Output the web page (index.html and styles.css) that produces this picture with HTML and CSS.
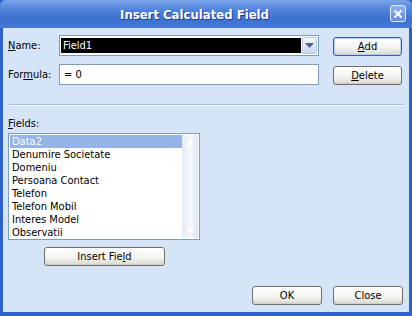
FILE: index.html
```html
<!DOCTYPE html>
<html>
<head>
<meta charset="UTF-8"/>
<title>Insert Calculated Field</title>
<link rel="stylesheet" href="styles.css">
</head>
<body>
<div class="window">
    <div class="titlebar">
        <span class="title">Insert Calculated Field</span>
        <span class="close-btn">
            <svg width="10" height="10" viewBox="0 0 10 10"><path d="M1.5 1.5 L8.5 8.5 M8.5 1.5 L1.5 8.5" stroke="#fff" stroke-width="2"/></svg>
        </span>
    </div>
    <div class="body">
        <div class="top">
            <div class="rows">
                <div class="row">
                    <label class="lbl"><u>N</u>ame:</label>
                    <div class="combo">
                        <span class="combo-text">Field1</span>
                        <span class="combo-arrow">
                            <svg width="9" height="5" viewBox="0 0 9 5"><path d="M0 0 H9 L4.5 5 Z" fill="#4d6185"/></svg>
                        </span>
                    </div>
                </div>
                <div class="row row-formula">
                    <label class="lbl">For<u>m</u>ula:</label>
                    <div class="input">= 0</div>
                </div>
            </div>
            <div class="side">
                <span class="btn btn-default"><u>A</u>dd</span>
                <span class="btn"><u>D</u>elete</span>
            </div>
        </div>
        <div class="sep"></div>
        <div class="fields-lbl"><u>F</u>ields:</div>
        <div class="listbox">
            <ul class="items">
                <li class="selected">Data2</li>
                <li>Denumire Societate</li>
                <li>Domeniu</li>
                <li>Persoana Contact</li>
                <li>Telefon</li>
                <li>Telefon Mobil</li>
                <li>Interes Model</li>
                <li>Observatii</li>
            </ul>
            <div class="scroll">
                <svg width="9" height="5" viewBox="0 0 9 5"><path d="M0 5 L4.5 0 L9 5 Z" fill="#fff"/></svg>
                <svg width="9" height="5" viewBox="0 0 9 5"><path d="M0 0 H9 L4.5 5 Z" fill="#fff"/></svg>
            </div>
        </div>
        <div class="insert-row">
            <span class="btn btn-wide">Insert Fie<u>l</u>d</span>
        </div>
        <div class="footer">
            <span class="btn">OK</span>
            <span class="btn">Close</span>
        </div>
    </div>
</div>
</body>
</html>
```

FILE: styles.css
```css
body {
    margin: 0;
    font-family: "DejaVu Sans Condensed", "DejaVu Sans", sans-serif;
    font-size: 11px;
    color: #000;
}
u {
    text-decoration: underline;
    text-underline-offset: 1px;
}
.window {
    width: 412px;
    height: 316px;
    display: flex;
    flex-direction: column;
    background: #2f62c8;
}
.titlebar {
    height: 28px;
    display: flex;
    align-items: center;
    position: relative;
    background: linear-gradient(#7aa5ea, #4b7fd8 40%, #3e72d0 70%, #4679d4);
    border-radius: 6px 6px 0 0;
}
.title {
    width: 389px;
    text-align: center;
    color: #fff;
    font-family: "DejaVu Sans Condensed", sans-serif;
    font-weight: bold;
    font-size: 13px;
    text-shadow: 1px 1px 0 #1c3f8c;
}
.close-btn {
    position: absolute;
    left: 390px;
    top: 5px;
    width: 14px;
    height: 15px;
    border: 1px solid #e6eefb;
    border-radius: 3px;
    background: linear-gradient(#8fb2ec, #5f8ee0);
    display: flex;
    align-items: center;
    justify-content: center;
}
.body {
    flex: 1;
    margin: 0 3px 4px 3px;
    background: #d6e4f7;
    padding: 7px 5px 0 5px;
    display: flex;
    flex-direction: column;
}
.top {
    display: flex;
}
.rows {
    display: flex;
    flex-direction: column;
    gap: 8px;
}
.row {
    display: flex;
    align-items: center;
}
.lbl {
    width: 51px;
}
.combo {
    width: 256px;
    height: 17px;
    border: 1px solid #7f9db9;
    background: #fff;
    display: flex;
    align-items: center;
    padding: 1px;
}
.combo-text {
    flex: 1;
    height: 15px;
    background: #000;
    color: #fff;
    padding-left: 2px;
    line-height: 15px;
}
.combo-arrow {
    width: 15px;
    height: 17px;
    margin-left: 1px;
    border: 1px solid #b9c9e3;
    border-radius: 2px;
    background: linear-gradient(#f4f7fd, #c9d8f1);
    box-sizing: border-box;
    display: flex;
    align-items: center;
    justify-content: center;
}
.input {
    width: 254px;
    height: 19px;
    border: 1px solid #7f9db9;
    background: #fff;
    padding-left: 4px;
    line-height: 19px;
}
.side {
    margin-left: 14px;
    padding-top: 2px;
    display: flex;
    flex-direction: column;
    gap: 10px;
}
.btn {
    width: 67px;
    height: 17px;
    border: 1px solid #6f6f6f;
    border-radius: 3px;
    background: linear-gradient(#ffffff, #f2f2ee 60%, #d8d8d0);
    display: flex;
    align-items: center;
    justify-content: center;
    box-shadow: inset 0 -1px 0 #d0d0c8;
}
.btn-default {
    border-color: #3d5fa6;
    box-shadow: inset 0 0 0 1px #b5cdf3;
}
.sep {
    height: 1px;
    margin: 19px 0 0 0;
    background: #aebfd8;
    border-bottom: 1px solid #f2f6fc;
}
.fields-lbl {
    margin-top: 11px;
    height: 13px;
}
.listbox {
    margin-top: 3px;
    width: 190px;
    height: 105px;
    border: 1px solid #7f9db9;
    background: #fff;
    display: flex;
}
.items {
    list-style: none;
    margin: 1px 0 0 1px;
    padding: 0;
    flex: 1;
}
.items li {
    height: 13px;
    line-height: 13px;
    padding-left: 2px;
}
.items li.selected {
    background: #94b3e6;
    color: #fff;
}
.scroll {
    width: 16px;
    margin: 1px 1px 1px 0;
    background: linear-gradient(90deg, #e4ecf8, #f4f7fc 50%, #dbe5f5);
    display: flex;
    flex-direction: column;
    justify-content: space-between;
    align-items: center;
    padding: 5px 0;
}
.insert-row {
    margin-top: 7px;
    padding-left: 36px;
}
.btn-wide {
    width: 119px;
}
.footer {
    margin-top: auto;
    margin-bottom: 7px;
    display: flex;
    justify-content: flex-end;
    gap: 11px;
    padding-right: 1px;
}
.footer .btn {
    width: 68px;
}
```
